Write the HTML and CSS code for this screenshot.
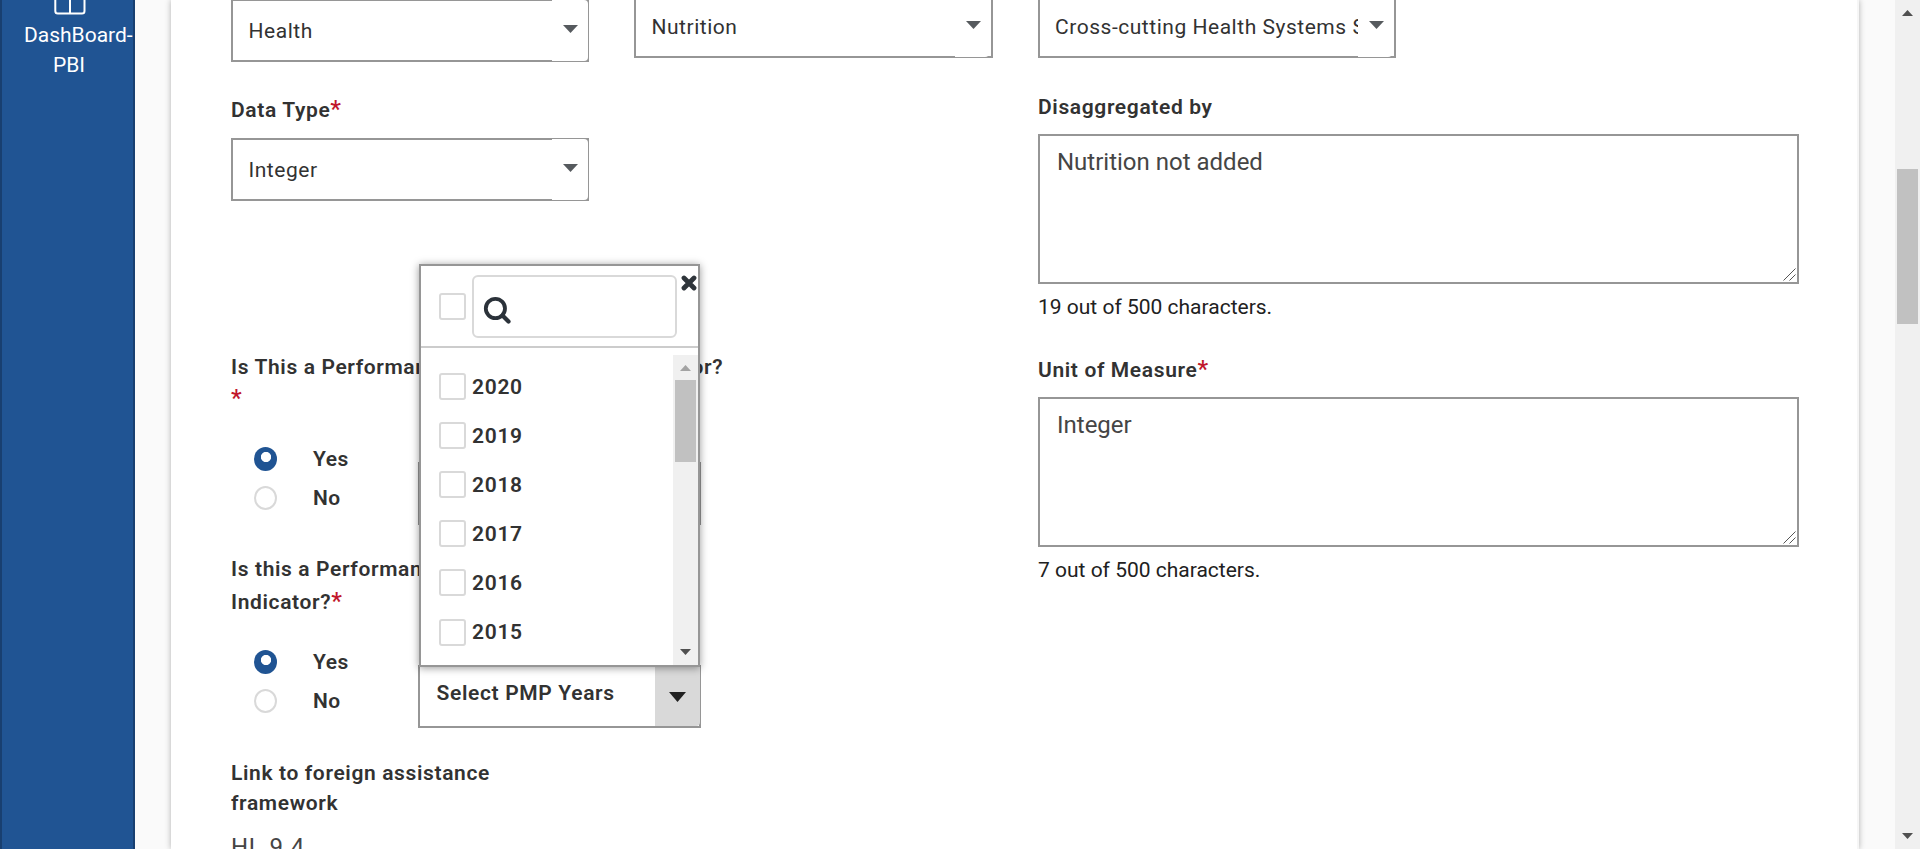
FILE: index.html
```html
<!DOCTYPE html>
<html lang="en">
<head>
<meta charset="utf-8">
<title>Indicator form</title>
<link rel="stylesheet" href="styles.css">
</head>
<body>
<div class="app">
  <nav class="sidebar">
    <svg class="nav-icon" width="32" height="32" viewBox="0 0 32 32" fill="none" stroke="#fff" stroke-width="2"><rect x="1.3" y="1.3" width="29.2" height="29.2" rx="2.5"/><path d="M16 1v29.500M1 14h30"/></svg>
    <span class="nav-text">DashBoard-<br>PBI</span>
  </nav>
  <main class="main">
    <section class="card">
      <div class="col col-a">
        <div class="select first"><span class="value">Health</span><span class="toggle"><i class="caret"></i></span></div>
        <div class="label data-type">Data Type<b class="req">*</b></div>
        <div class="select"><span class="value">Integer</span><span class="toggle"><i class="caret"></i></span></div>

        <div class="label question-one">Is This a Performance Plan and Report Indicator?<br><b class="req">*</b></div>
        <div class="answer answer-one">
          <div class="radios">
            <div class="radio"><i class="dot on"></i>Yes</div>
            <div class="radio"><i class="dot"></i>No</div>
          </div>
          <div class="multi"></div>
        </div>

        <div class="label question-two">Is this a Performance Management Plan<br>Indicator?<b class="req">*</b></div>
        <div class="answer answer-two">
          <div class="radios">
            <div class="radio"><i class="dot on"></i>Yes</div>
            <div class="radio"><i class="dot"></i>No</div>
          </div>
          <div class="multi">
            <span class="multi-text">Select PMP Years</span>
            <span class="multi-toggle"><i class="caret-dark"></i></span>
            <div class="popup">
              <div class="popup-head">
                <i class="box"></i>
                <div class="search"><svg width="28" height="28" viewBox="0 0 28 28" fill="none" stroke="#2b323a"><circle cx="12.400" cy="11.500" r="9.600" stroke-width="3.800"/><path d="M19.500 18.500L25.500 24.500" stroke-width="4.200" stroke-linecap="round"/></svg></div>
                <svg class="close" width="16" height="16" viewBox="0 0 16 16" stroke="#2f353b" stroke-width="4.800" stroke-linecap="round"><path d="M3 3L13 13M13 3L3 13"/></svg>
              </div>
              <div class="popup-body">
                <div class="years">
                  <div class="year"><i class="box"></i>2020</div>
                  <div class="year"><i class="box"></i>2019</div>
                  <div class="year"><i class="box"></i>2018</div>
                  <div class="year"><i class="box"></i>2017</div>
                  <div class="year"><i class="box"></i>2016</div>
                  <div class="year"><i class="box"></i>2015</div>
                </div>
                <div class="track inner"><i class="up"></i><i class="thumb"></i><i class="down"></i></div>
              </div>
            </div>
          </div>
        </div>

        <div class="label link-label">Link to foreign assistance<br>framework</div>
        <div class="link-value">HL.9.4</div>
      </div>

      <div class="col col-b">
        <div class="select raised"><span class="value">Nutrition</span><span class="toggle"><i class="caret"></i></span></div>
      </div>

      <div class="col col-c">
        <div class="select raised clipped"><span class="value">Cross-cutting Health Systems Strengthening</span><span class="toggle"><i class="caret"></i></span></div>
        <div class="label disagg">Disaggregated by</div>
        <div class="area">Nutrition not added<svg class="grip" width="13" height="13" viewBox="0 0 13 13" stroke="#555" stroke-width="1"><path d="M.5 12.500L12.500.5M6.500 12.500L12.500 6.500"/></svg></div>
        <div class="count">19 out of 500 characters.</div>
        <div class="label unit">Unit of Measure<b class="req">*</b></div>
        <div class="area">Integer<svg class="grip" width="13" height="13" viewBox="0 0 13 13" stroke="#555" stroke-width="1"><path d="M.5 12.500L12.500.5M6.500 12.500L12.500 6.500"/></svg></div>
        <div class="count">7 out of 500 characters.</div>
      </div>
    </section>
  </main>
  <div class="track page"><i class="up"></i><i class="thumb"></i><i class="down"></i></div>
</div>
</body>
</html>
```
FILE: styles.css
```css
* { box-sizing: border-box; }
body { margin: 0; font-family: Roboto, sans-serif; color: #323232; overflow: hidden; }
.app { display: flex; width: 1920px; height: 849px; overflow: hidden; background: #fafafa; }

.sidebar { width: 135px; flex: none; background: #205493; border: solid #183f70; border-width: 0 2px; display: flex; flex-direction: column; padding-left: 22px; }
.nav-icon { margin: -17px 0 0 30px; flex: none; }
.nav-text { width: 90px; margin-top: 5px; font-size: 21px; line-height: 30px; color: #fff; text-align: center; white-space: nowrap; }

.main { flex: 1; display: flex; padding: 0 36px; height: 849px; }
.card { width: 1688px; height: 849px; flex: none; display: flex; padding-left: 60px; background: #fff; border-right: 2px solid #f6f6f6; box-shadow: 0 0 6px rgba(0,0,0,.3); }
.col { flex: none; }
.col-a { width: 403px; }
.col-b { width: 404px; }
.col-c { width: 761px; }

.select { position: relative; width: 358px; height: 63px; border: 2px solid #969696; display: flex; align-items: center; padding-left: 15.500px; font-size: 21px; letter-spacing: .53px; color: #323232; }
.first { margin-top: -1px; }
.raised { width: 359px; margin-top: -5px; }
.clipped { width: 358px; padding-left: 15px; }
.value { flex: 1; white-space: nowrap; overflow: hidden; line-height: 30px; }
.toggle { width: 36px; height: 61px; flex: none; margin-right: -1px; background: #fff; border-radius: 0 4px 4px 0; }
.raised .toggle { width: 34px; margin-right: 2px; }
.caret { display: block; margin: 25px 0 0 11px; width: 15px; height: 8px; background: #565a5e; clip-path: polygon(0 0, 100% 0, 50% 100%); }

.label { font-size: 21px; font-weight: 600; letter-spacing: .63px; line-height: 30px; white-space: nowrap; color: #323232; }
.req { font-size: 24px; line-height: 0; font-weight: 500; color: #c1172c; letter-spacing: 0; }
.data-type { margin: 33px 0 13px; height: 30px; }
.question-one { margin-top: 150px; line-height: 32px; height: 64px; }
.question-two { margin-top: 36px; line-height: 33px; }
.answer { display: flex; align-items: flex-start; height: 78px; }
.answer-one { margin-top: 24px; }
.answer-two { margin-top: 23px; }
.radios { width: 187px; flex: none; padding-left: 23px; }
.radio { display: flex; align-items: center; gap: 36px; height: 39px; font-size: 21px; font-weight: 600; letter-spacing: .5px; }
.dot { width: 23px; height: 24px; border: 2px solid #d9d9d9; border-radius: 50%; }
.dot.on { border: 0; background: radial-gradient(circle at 12px 10px, #fff 4.700px, #205493 5.500px); }

.multi { position: relative; width: 283px; height: 63px; flex: none; margin-top: 23px; border: 2px solid #969696; background: #fff; display: flex; justify-content: space-between; }
.multi-text { padding: 11px 0 0 16.500px; font-size: 21px; line-height: 30px; font-weight: 600; letter-spacing: .65px; }
.multi-toggle { width: 45px; margin-right: -1px; background: #d9d9d9; display: flex; justify-content: center; padding-top: 25px; border-radius: 0 0 4px 0; }
.caret-dark { width: 17px; height: 10px; background: #212121; clip-path: polygon(0 0, 100% 0, 50% 100%); }

.popup { position: absolute; left: -1px; top: -403px; width: 281px; height: 403px; border: 2px solid #969696; background: #fff; box-shadow: 0 1px 8px rgba(0,0,0,.4); z-index: 2; }
.popup-head { height: 82px; border-bottom: 2px solid #ccc; display: flex; align-items: flex-start; padding: 9px 1px 0 18px; }
.popup-head .box { margin-top: 18px; }
.box { width: 27px; height: 27px; flex: none; border: 2px solid #d9d9d9; border-radius: 3px; background: #fff; }
.search { width: 205px; height: 63px; flex: none; margin-left: 6px; border: 2px solid #d9d9d9; border-radius: 6px; padding: 20px 0 0 9px; }
.close { margin-left: 4px; flex: none; }
.popup-body { display: flex; justify-content: space-between; height: 317px; }
.years { padding: 14px 0 0 18px; }
.year { display: flex; align-items: center; gap: 6px; height: 49.100px; font-size: 21px; font-weight: 600; letter-spacing: .7px; }

.track { position: relative; width: 25px; flex: none; background: #f0f0f0; }
.track .up, .track .down, .track .thumb { position: absolute; }
.track .up { left: 7px; top: 10px; width: 11px; height: 6px; background: #a3a3a3; clip-path: polygon(50% 0, 100% 100%, 0 100%); }
.track .down { left: 7px; bottom: 10px; width: 11px; height: 6px; background: #505050; clip-path: polygon(0 0, 100% 0, 50% 100%); }
.track .thumb { left: 2px; width: 21px; background: #c1c1c1; }
.page .thumb { top: 169px; height: 155px; }
.page .up { background: #505050; }
.inner { margin-top: 7px; height: 310px; }
.inner .thumb { top: 25px; height: 82px; }

.link-label { margin-top: 38px; height: 60px; }
.link-value { margin-top: 14px; font-size: 24px; line-height: 30px; letter-spacing: .7px; color: #454545; }

.disagg { margin-top: 34px; }
.area { position: relative; height: 150px; margin-top: 12px; border: 2px solid #969696; padding: 11px 17px; font-size: 24px; line-height: 30px; color: #454545; }
.grip { position: absolute; right: 1px; bottom: 1px; }
.count { margin-top: 8px; font-size: 21px; line-height: 30px; color: #212121; }
.unit { margin-top: 33px; }
```
